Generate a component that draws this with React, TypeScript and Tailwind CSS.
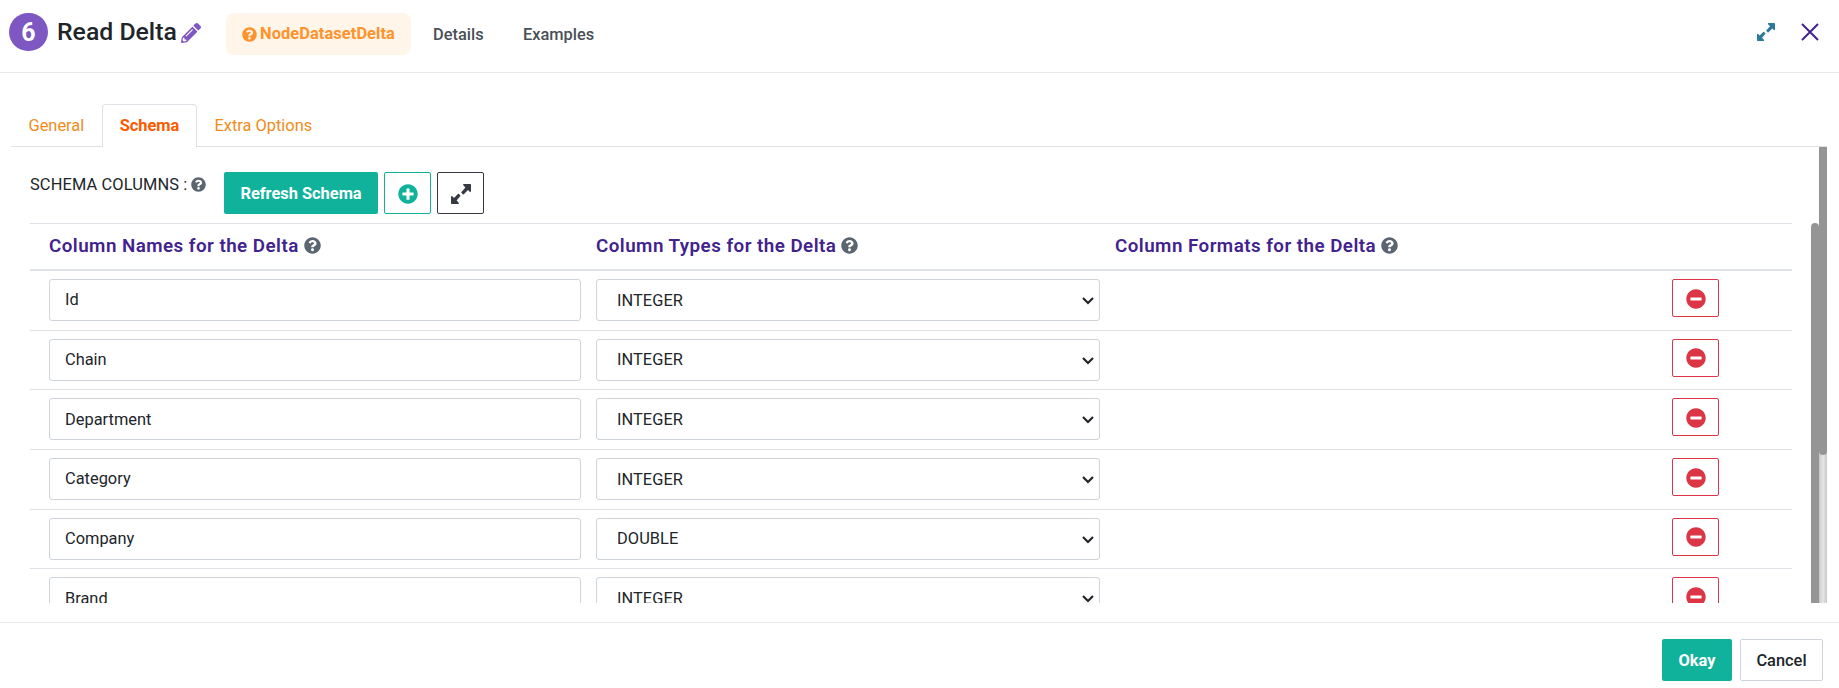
import { FaQuestionCircle, FaPlusCircle, FaMinusCircle } from "react-icons/fa";

const rows = [
  { name: "Id", type: "INTEGER" },
  { name: "Chain", type: "INTEGER" },
  { name: "Department", type: "INTEGER" },
  { name: "Category", type: "INTEGER" },
  { name: "Company", type: "DOUBLE" },
  { name: "Brand", type: "INTEGER" },
];

const grid = "grid grid-cols-[532px_504px_1fr_47px] pl-[19px] pr-[73px] gap-x-[15px]";

function Expand({ className }: { className: string }) {
  return (
    <svg viewBox="0 0 20 20" className={className} fill="currentColor">
      <path d="M12.500 0H19.200q.8 0 .8.800v6.700q-.8.900-1.600 0L17 6.100l-4.200 4.200q-.5.500-1 0l-1.300-1.300q-.5-.5 0-1L14.400 3.500 12.500 1.600q-.9-.8 0-1.600z" />
      <path d="M7.500 20H.800q-.8 0-.8-.8v-6.700q.8-.9 1.600 0L3 13.900l3.900-3.900q.5-.5 1 0l1.300 1.300q.5.500 0 1L5.600 16.500l1.900 1.900q.9.800 0 1.600z" />
    </svg>
  );
}

function Pencil() {
  return (
    <svg viewBox="0 0 512 512" className="ml-1.5 mt-2.5 size-5 text-[#7e57c2]" fill="currentColor">
      <path d="M497.900 142.100l-46.100 46.100c-4.700 4.700-12.300 4.700-17 0l-111-111c-4.700-4.700-4.700-12.300 0-17l46.100-46.100c18.700-18.700 49.100-18.700 67.900 0l60.100 60.100c18.800 18.700 18.800 49.100 0 67.900zM284.200 99.800L21.600 362.400.4 483.900c-2.900 16.400 11.400 30.600 27.800 27.800l121.500-21.300 262.600-262.600c4.700-4.700 4.700-12.300 0-17l-111-111c-4.800-4.700-12.400-4.700-17.100 0zM124.100 339.900c-5.500-5.500-5.500-14.300 0-19.800l154-154c5.500-5.500 14.300-5.500 19.800 0s5.500 14.300 0 19.800l-154 154c-5.500 5.500-14.300 5.500-19.800 0zM88 424h48v36.300l-64.500 11.300-31.100-31.100L51.700 376H88v48z" />
    </svg>
  );
}

function Heading({ text }: { text: string }) {
  return (
    <div className="flex items-start gap-[5px] whitespace-nowrap">
      <span>{text}</span>
      <FaQuestionCircle className="mt-1 size-[17px] text-[#5a6570]" />
    </div>
  );
}

export default function App() {
  return (
    <div className="flex h-[688px] w-[1839px] flex-col overflow-hidden bg-white font-['Roboto',sans-serif] text-[16.4px] text-[#212529]">
      <header className="flex h-[73px] shrink-0 items-start border-b border-[#e9e9e9] pl-[9px] pt-[13px]">
        <div className="flex h-[38px] w-[39px] items-center justify-center rounded-full bg-[#7e57c2] pt-px text-[25px] font-bold text-white">6</div>
        <h1 className="ml-[9px] w-[118px] whitespace-nowrap text-[24.8px] font-medium leading-[38px]">Read Delta</h1>
        <Pencil />
        <div className="ml-[25px] flex h-[42px] w-[185px] items-center justify-center gap-[3px] rounded-lg bg-[#fff5e9] pt-px font-bold tracking-[0.08px] text-[#ff922b]">
          <FaQuestionCircle className="size-[15px]" />
          <span>NodeDatasetDelta</span>
        </div>
        <span className="ml-[22px] w-[90px] font-medium leading-[43px] text-[#495057]">Details</span>
        <span className="font-medium leading-[43px] text-[#495057]">Examples</span>
        <Expand className="ml-auto mt-2.5 size-[18px] text-[#2b7a99]" />
        <svg viewBox="0 0 18 18" className="ml-[26px] mr-5 mt-2.5 size-[18px] text-[#41228e]" fill="none" stroke="currentColor" strokeWidth="2">
          <path d="M1 1l16 16M17 1L1 17" />
        </svg>
      </header>

      <nav className="ml-[11px] mr-3 mt-[31px] flex h-[43px] shrink-0 border-b border-[#dee2e6] text-[#f08c1a]">
        <span className="w-[91px] pl-[17.500px] leading-[43px]">General</span>
        <span className="h-[43px] w-[95px] rounded-t border border-b-0 border-[#dee2e6] bg-white text-center font-bold leading-[41px] text-[#fd5a00]">Schema</span>
        <span className="pl-[17.500px] leading-[43px]">Extra Options</span>
      </nav>

      <main className="ml-[30px] mr-3 flex h-[456px] shrink-0 overflow-hidden">
        <div className="flex w-[1781px] flex-col">
          <div className="flex h-[76px] shrink-0 items-start pt-[25px]">
            <span className="mt-[3px] w-[161px] whitespace-nowrap leading-5 tracking-[0.13px]">SCHEMA COLUMNS :</span>
            <FaQuestionCircle className="mt-[5px] size-[15px] text-[#5a6570]" />
            <button className="ml-[18px] h-[42px] w-[154px] rounded-xs bg-[#10b29b] pt-0.5 font-bold text-white">Refresh Schema</button>
            <button className="ml-1.5 flex h-[42px] w-[47px] items-center justify-center rounded-xs border border-[#10b29b] text-[#10b29b]">
              <FaPlusCircle className="mt-px size-5" />
            </button>
            <button className="ml-1.5 flex h-[42px] w-[47px] items-center justify-center rounded-xs border border-[#343a40] text-[#343a40]">
              <Expand className="mt-px size-5" />
            </button>
          </div>
          <div className="w-[1762px]">
            <div className={grid + " h-12 border-b-2 border-t border-[#dee2e6] pt-[9px] text-[18.8px] font-semibold leading-[26px] tracking-[0.46px] text-[#41228e]"}>
              <Heading text="Column Names for the Delta" />
              <Heading text="Column Types for the Delta" />
              <Heading text="Column Formats for the Delta" />
            </div>
            {rows.map((r) => (
              <div key={r.name} className={grid + " h-[59.7px] border-b border-[#dee2e6] pt-2"}>
                <div className="flex h-[42px] items-center rounded-[3px] border border-[#ced4da] pl-[15px] pt-px">{r.name}</div>
                <div className="flex h-[42px] items-center justify-between rounded-[3px] border border-[#ced4da] pl-5 pr-[5px] pt-0.5">
                  <span className="tracking-[0.05px]">{r.type}</span>
                  <svg viewBox="0 0 12 8" className="h-2 w-3" fill="none" stroke="#212529" strokeWidth="2.200">
                    <path d="M1 1l5 5 5-5" />
                  </svg>
                </div>
                <span />
                <button className="flex h-[38px] items-center justify-center rounded-xs border border-[#dc3545] text-[#dc3545]">
                  <FaMinusCircle className="mt-px size-5" />
                </button>
              </div>
            ))}
          </div>
        </div>
        <div className="mt-[76px] h-[380px] w-2 rounded-t bg-[#959595]" />
        <div className="h-[456px] w-2 bg-[#dfdfdf] bg-linear-to-r from-[#c8c8c8] via-[#e6e6e6] to-[#c8c8c8]">
          <div className="h-[308px] rounded-b bg-[#959595]" />
        </div>
      </main>

      <footer className="mt-[19px] flex shrink-0 justify-end gap-2 border-t border-[#e9e9e9] pr-4 pt-4">
        <button className="h-[42px] w-[70px] rounded-xs bg-[#10b29b] pt-0.5 font-bold text-white">Okay</button>
        <button className="h-[42px] w-[83px] rounded-xs border border-[#ced4da] pt-0.5 font-medium">Cancel</button>
      </footer>
    </div>
  );
}
